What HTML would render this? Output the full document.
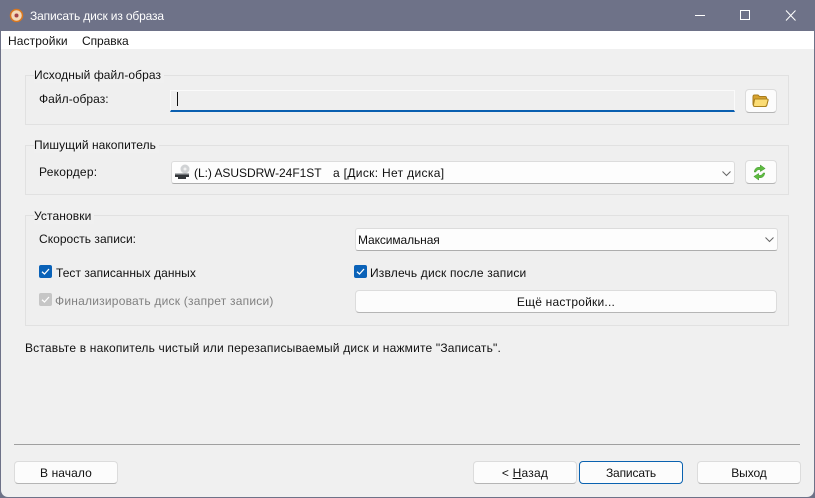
<!DOCTYPE html>
<html lang="ru"><head><meta charset="utf-8"><title>Записать диск из образа</title>
<style>
html,body{margin:0;padding:0;width:815px;height:498px;overflow:hidden;background:#6e7288}
body{font:12px "Liberation Sans","DejaVu Sans",sans-serif;color:#111;position:relative}
.a{position:absolute;white-space:pre;line-height:16px}
.win{position:absolute;left:1px;top:31px;width:813px;height:466px;background:#f0f0f0;border-radius:0 0 7px 7px;overflow:hidden}
.tb{left:30px;top:8px;color:#fff;font-size:12px;letter-spacing:-.15px}
.menu{position:absolute;left:1px;top:31px;width:813px;height:18px;background:#fff}
.grp{position:absolute;left:25px;width:762px;border:1px solid #e1e1e1;background:#efefef}
.lg{background:#f0f0f0;padding:0 3px 0 0}
.btn{position:absolute;box-sizing:border-box;background:#fcfcfc;border:1px solid #dcdcdc;border-bottom-color:#b5b5b5;border-radius:4px;text-align:center;line-height:23px;color:#111}
.cb{position:absolute;box-sizing:border-box;background:#fdfdfd;border:1px solid #dcdcdc;border-bottom-color:#adadad;border-radius:3px}
.chk{position:absolute;width:13px;height:13px;border-radius:2px;background:#0a62b8}
.chk svg{display:block}
</style></head><body>
<svg class="a" style="left:9px;top:8px" width="16" height="16" viewBox="0 0 16 16"><circle cx="7.500" cy="7.500" r="6" fill="#f3d9b8" stroke="#d9771f" stroke-width="1.500"/><circle cx="7.500" cy="7.500" r="2" fill="#a3434a"/></svg>
<div class="a tb">Записать диск из образа</div>
<svg class="a" style="left:690px;top:8px" width="110" height="16" viewBox="0 0 110 16" fill="none" stroke="#fff" stroke-width="1"><path d="M5 7.500H15"/><rect x="50.500" y="2.500" width="9" height="9"/><path d="M96 2.500L105.500 12.500M105.500 2.500L96 12.500"/></svg>
<div class="win"></div>
<div class="menu"></div>
<div class="a" style="left:8px;top:33px;letter-spacing:.1px">Настройки</div>
<div class="a" style="left:82px;top:33px;letter-spacing:-.06px">Справка</div>

<div class="grp" style="top:75px;height:48px"></div>
<div class="a lg" style="left:34px;top:67px;letter-spacing:.07px">Исходный файл-образ</div>
<div class="a" style="left:39px;top:91px;letter-spacing:.05px">Файл-образ:</div>
<div class="a" style="left:171px;top:90px;width:563px;height:19px;background:#efefef;border:1px solid #fafafa;border-bottom:2px solid #0a5fb0;margin-left:-1px"></div>
<div class="a" style="left:177px;top:92px;width:1px;height:14px;background:#111"></div>
<div class="btn" style="left:745px;top:89px;width:32px;height:24px"></div>
<svg class="a" style="left:752px;top:94px" width="17" height="14" viewBox="0 0 17 14"><path d="M1 3Q1 1 2.500 1H6L7.500 2.500H13Q14.500 2.500 14.500 4V6H3L1.500 11Q1 11 1 10Z" fill="#d7a22e" stroke="#a87c1c" stroke-width="1"/><path d="M3 5H15Q16.500 5 16 6.500L15 10.500Q14.700 12.500 13 12.500H3Q1 12.500 1.500 10.500L2.300 6.500Q2.500 5 3 5Z" fill="#fbdc74" stroke="#a9801d" stroke-width="1.100"/></svg>

<div class="grp" style="top:145px;height:48px"></div>
<div class="a lg" style="left:34px;top:137px;letter-spacing:.05px">Пишущий накопитель</div>
<div class="a" style="left:39px;top:164px;letter-spacing:.22px">Рекордер:</div>
<div class="cb" style="left:171px;top:161px;width:564px;height:23px"></div>
<svg class="a" style="left:174px;top:164px" width="18" height="17" viewBox="0 0 18 17"><circle cx="11" cy="5" r="4.500" fill="#d0d2d4"/><circle cx="11" cy="5" r="1.500" fill="#f2f2f2"/><path d="M1 9.500H15V13H12V15H4V13H1Z" fill="#33363a"/><path d="M1 9.500H15V11H1Z" fill="#6e7276"/></svg>
<div class="a" style="left:194px;top:165px;letter-spacing:-.04px">(L:) ASUSDRW-24F1ST</div>
<div class="a" style="left:333px;top:165px;letter-spacing:.33px">a [Диск: Нет диска]</div>
<svg class="a" style="left:722px;top:170px" width="9" height="7" viewBox="0 0 9 7" fill="none" stroke="#666" stroke-width="1"><path d="M.500 1.500L4.500 5.500L8.500 1.500"/></svg>
<div class="btn" style="left:745px;top:160px;width:32px;height:24px"></div>
<svg class="a" style="left:753px;top:164px" width="13" height="17" viewBox="0 0 16 18" preserveAspectRatio="none"><path d="M1.500 8.500C2 4.500 5 3 9 3.500V1L15 4.800L9 8V6C6.500 5.700 4.500 6.500 3.500 8.500Z" fill="#5dbb3f" stroke="#3b8e2a" stroke-width=".5"/><path d="M14.500 9.500C14 13.500 11 15 7 14.500V17L1 13.200L7 10V12C9.500 12.300 11.500 11.500 12.500 9.500Z" fill="#5dbb3f" stroke="#3b8e2a" stroke-width=".5"/></svg>

<div class="grp" style="top:215px;height:109px"></div>
<div class="a lg" style="left:34px;top:208px;letter-spacing:.1px">Установки</div>
<div class="a" style="left:39px;top:231px;letter-spacing:.03px">Скорость записи:</div>
<div class="cb" style="left:355px;top:228px;width:423px;height:23px"></div>
<div class="a" style="left:358px;top:232px;letter-spacing:-.1px">Максимальная</div>
<svg class="a" style="left:765px;top:236px" width="9" height="7" viewBox="0 0 9 7" fill="none" stroke="#666" stroke-width="1"><path d="M.500 1.500L4.500 5.500L8.500 1.500"/></svg>

<div class="chk" style="left:39px;top:265px"><svg width="13" height="13" viewBox="0 0 13 13" fill="none" stroke="#fff" stroke-width="1.300"><path d="M3 6.800L5.500 9L10 4"/></svg></div>
<div class="a" style="left:56px;top:265px;letter-spacing:.04px">Тест записанных данных</div>
<div class="chk" style="left:354px;top:265px"><svg width="13" height="13" viewBox="0 0 13 13" fill="none" stroke="#fff" stroke-width="1.300"><path d="M3 6.800L5.500 9L10 4"/></svg></div>
<div class="a" style="left:370px;top:265px;letter-spacing:.18px">Извлечь диск после записи</div>
<div class="chk" style="left:39px;top:293px;background:#c6c6c6"><svg width="13" height="13" viewBox="0 0 13 13" fill="none" stroke="#fff" stroke-width="1.300"><path d="M3 6.800L5.500 9L10 4"/></svg></div>
<div class="a" style="left:55px;top:293px;color:#808080;letter-spacing:.22px">Финализировать диск (запрет записи)</div>
<div class="btn" style="left:355px;top:290px;width:422px;height:23px;letter-spacing:.22px">Ещё настройки...</div>

<div class="a" style="left:25px;top:340px;letter-spacing:.18px">Вставьте в накопитель чистый или перезаписываемый диск и нажмите "Записать".</div>

<div class="a" style="left:14px;top:444px;width:786px;height:1px;background:#a0a0a0"></div>
<div class="btn" style="left:14px;top:461px;width:104px;height:23px;letter-spacing:.1px">В начало</div>
<div class="btn" style="left:473px;top:461px;width:104px;height:23px;letter-spacing:.22px">&lt; <u>Н</u>азад</div>
<div class="btn" style="left:579px;top:461px;width:104px;height:23px;border:1px solid #0a62b0;letter-spacing:-.15px">Записать</div>
<div class="btn" style="left:697px;top:461px;width:104px;height:23px;letter-spacing:-.1px">Выход</div>
</body></html>
